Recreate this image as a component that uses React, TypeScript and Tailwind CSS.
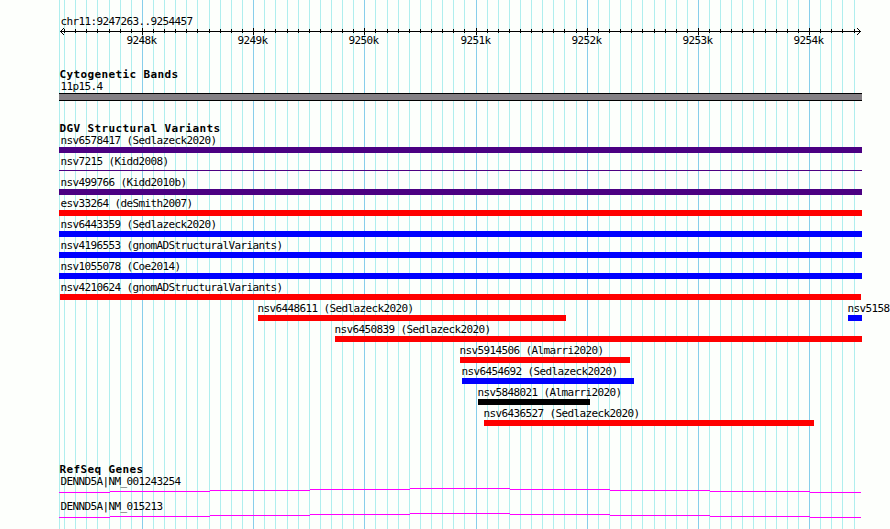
type Feature = { name: string; start: number; end: number; color: string; thin?: boolean };

const PURPLE = "bg-[#4b0082]";
const RED = "bg-[#ff0000]";
const BLUE = "bg-[#0000ff]";
const BLACK = "bg-black";

const rows: Feature[][] = [
  [{ name: "nsv6578417 (Sedlazeck2020)", start: 59, end: 862, color: PURPLE }],
  [{ name: "nsv7215 (Kidd2008)", start: 59, end: 862, color: PURPLE, thin: true }],
  [{ name: "nsv499766 (Kidd2010b)", start: 59, end: 862, color: PURPLE }],
  [{ name: "esv33264 (deSmith2007)", start: 59, end: 862, color: RED }],
  [{ name: "nsv6443359 (Sedlazeck2020)", start: 59, end: 862, color: BLUE }],
  [{ name: "nsv4196553 (gnomADStructuralVariants)", start: 59, end: 862, color: BLUE }],
  [{ name: "nsv1055078 (Coe2014)", start: 59, end: 862, color: BLUE }],
  [{ name: "nsv4210624 (gnomADStructuralVariants)", start: 60, end: 861, color: RED }],
  [
    { name: "nsv6448611 (Sedlazeck2020)", start: 258, end: 566, color: RED },
    { name: "nsv5158", start: 848, end: 862, color: BLUE },
  ],
  [{ name: "nsv6450839 (Sedlazeck2020)", start: 335, end: 862, color: RED }],
  [{ name: "nsv5914506 (Almarri2020)", start: 460, end: 630, color: RED }],
  [{ name: "nsv6454692 (Sedlazeck2020)", start: 462, end: 634, color: BLUE }],
  [{ name: "nsv5848021 (Almarri2020)", start: 478, end: 590, color: BLACK }],
  [{ name: "nsv6436527 (Sedlazeck2020)", start: 484, end: 814, color: RED }],
];

const minor = [
  64, 75, 86, 97, 109, 120, 131, 153, 164, 175, 186, 197, 209, 220, 231, 242, 264, 275, 287, 298,
  309, 320, 331, 342, 353, 375, 387, 398, 409, 420, 431, 442, 453, 464, 487, 498, 509, 520, 531,
  542, 553, 564, 576, 598, 609, 620, 631, 642, 654, 665, 676, 687, 709, 720, 731, 742, 753, 765,
  776, 787, 798, 820, 831, 842, 854,
];
const major = [142, 253, 364, 476, 587, 698, 809];

const geneSteps = [
  [59, 110, 4],
  [110, 210, 3],
  [210, 310, 2],
  [310, 410, 1],
  [410, 510, 0],
  [510, 610, 1],
  [610, 710, 2],
  [710, 810, 3],
  [810, 861, 4],
];

function Grid() {
  return (
    <svg className="absolute inset-0" width="890" height="529" shapeRendering="crispEdges">
      {[59, ...minor].map((x) => (
        <rect key={x} x={x} y="0" width="1" height="529" fill="#afeeee" />
      ))}
      {major.map((x) => (
        <rect key={x} x={x} y="0" width="1" height="529" fill="#87ceeb" />
      ))}
    </svg>
  );
}

function Axis() {
  return (
    <svg className="block" width="890" height="19">
      <g shapeRendering="crispEdges">
        <rect x="60" y="3" width="801" height="1" />
        {minor.map((x) => (
          <rect key={x} x={x} y="1" width="1" height="4" />
        ))}
        {major.map((x) => (
          <rect key={x} x={x} y="0" width="1" height="7" />
        ))}
        {[1, 2, 3].map((d) => (
          <g key={d}>
            <rect x={60 + d} y={3 - d} width="1" height="1" />
            <rect x={60 + d} y={3 + d} width="1" height="1" />
            <rect x={860 - d} y={3 - d} width="1" height="1" />
            <rect x={860 - d} y={3 + d} width="1" height="1" />
          </g>
        ))}
      </g>
      {major.map((x, i) => (
        <text key={x} x={x - 15.5} y="16">
          {`${9248 + i}k`}
        </text>
      ))}
    </svg>
  );
}

function Heading({ children }: { children: string }) {
  return <h2 className="ml-[59.5px] h-3 font-bold tracking-[0.378px]">{children}</h2>;
}

function Label({ children }: { children: string }) {
  return <div className="ml-[60.4px] h-[13px]">{children}</div>;
}

function FeatureRow({ features }: { features: Feature[] }) {
  return (
    <div className="flex h-[21px]">
      {features.map((f, i) => (
        <div
          key={f.name}
          className="shrink-0"
          style={{ marginLeft: f.start - (i ? features[i - 1].end : 0), width: f.end - f.start }}
        >
          <div className="h-[13px]" style={{ marginLeft: Math.max(60.4, f.start - 0.6) - f.start }}>
            {f.name}
          </div>
          <div className={`${f.color} ${f.thin ? "mt-[2px] h-px" : "h-[6px]"}`} />
        </div>
      ))}
    </div>
  );
}

function Gene({ name }: { name: string }) {
  return (
    <div className="h-[25px]">
      <Label>{name}</Label>
      <svg className="block" width="890" height="5" shapeRendering="crispEdges">
        {geneSteps.map(([a, b, y]) => (
          <rect key={a} x={a} y={y} width={b - a} height="1" fill="#ff00ff" />
        ))}
      </svg>
    </div>
  );
}

export default function App() {
  return (
    <div className="relative h-[529px] w-[890px] overflow-hidden bg-[#fdfffc] font-['DejaVu_Sans_Mono',monospace] text-[11px] leading-[13px] tracking-[-0.622px] whitespace-nowrap text-black">
      <Grid />
      <main className="relative pt-[15px]">
        <Label>chr11:9247263..9254457</Label>
        <Axis />
        <section className="mt-[21px]">
          <Heading>Cytogenetic Bands</Heading>
          <Label>11p15.4</Label>
          <div className="ml-[59px] h-2 w-[803px] border-y border-black bg-[#848084]" />
        </section>
        <section className="mt-[21px]">
          <Heading>DGV Structural Variants</Heading>
          {rows.map((r) => (
            <FeatureRow key={r[0].name} features={r} />
          ))}
        </section>
        <section className="mt-[35px]">
          <Heading>RefSeq Genes</Heading>
          <Gene name="DENND5A|NM_001243254" />
          <Gene name="DENND5A|NM_015213" />
        </section>
      </main>
    </div>
  );
}
